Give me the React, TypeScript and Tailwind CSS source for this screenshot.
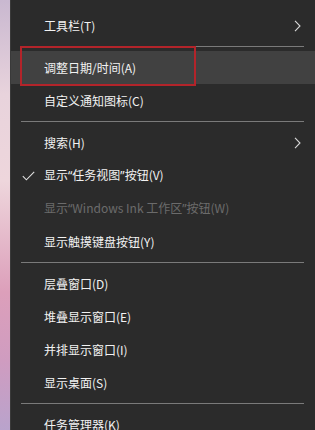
import React from 'react';

type Item =
  | { kind: 'sep' }
  | { kind: 'item'; label: React.ReactNode; sub?: boolean; checked?: boolean; disabled?: boolean; hover?: boolean };

// Latin font for the curly quotes so they render half-width, as in the Windows menu
const Q = ({ c }: { c: string }) => (
  <span style={{ fontFamily: '"Noto Sans", sans-serif' }}>{c}</span>
);

const items: Item[] = [
  { kind: 'item', label: '工具栏(T)', sub: true },
  { kind: 'sep' },
  { kind: 'item', label: '调整日期/时间(A)', hover: true },
  { kind: 'item', label: '自定义通知图标(C)' },
  { kind: 'sep' },
  { kind: 'item', label: '搜索(H)', sub: true },
  {
    kind: 'item',
    label: (
      <>
        显示<Q c="“" />任务视图<Q c="”" />按钮(V)
      </>
    ),
    checked: true,
  },
  {
    kind: 'item',
    label: (
      <>
        显示<Q c="“" />Windows Ink 工作区<Q c="”" />按钮(W)
      </>
    ),
    disabled: true,
  },
  { kind: 'item', label: '显示触摸键盘按钮(Y)' },
  { kind: 'sep' },
  { kind: 'item', label: '层叠窗口(D)' },
  { kind: 'item', label: '堆叠显示窗口(E)' },
  { kind: 'item', label: '并排显示窗口(I)' },
  { kind: 'item', label: '显示桌面(S)' },
  { kind: 'sep' },
  { kind: 'item', label: '任务管理器(K)' },
];

function Chevron() {
  return (
    <svg width="7" height="12" viewBox="0 0 7 12" fill="none">
      <path d="M1 0.8 L6 6 L1 11.2" stroke="#d8d8d8" strokeWidth="1.1" />
    </svg>
  );
}

function Check() {
  return (
    <svg width="13" height="10" viewBox="0 0 13 10" fill="none">
      <path d="M0.8 5.2 L4.4 8.8 L12.2 0.8" stroke="#e0e0e0" strokeWidth="1.1" />
    </svg>
  );
}

export default function App() {
  return (
    <div
      className="flex w-[315px] h-[430px] overflow-hidden"
      style={{ fontFamily: '"Noto Sans CJK SC", "Noto Sans", sans-serif' }}
    >
      {/* desktop wallpaper strip */}
      <div className="w-[10px] shrink-0 bg-[linear-gradient(to_bottom,#c9b8d0_0%,#e8d3dc_22%,#eed6dc_42%,#dc9fba_68%,#cf9cc0_84%,#b9a3cc_100%)]" />

      {/* context menu */}
      <div className="relative flex-1 bg-[#2b2b2b] border-l border-[#3a3a3a] pt-[9px]">
        {items.map((it, i) =>
          it.kind === 'sep' ? (
            <div key={i} className="py-[4px] pl-[10px] pr-[11px]">
              <div className="h-px bg-[#7a7a7a]" />
            </div>
          ) : (
            <div
              key={i}
              className={`flex items-center h-[33px] pl-[33px] pr-[14px] text-[12px] ${
                it.hover ? 'bg-[#414141]' : ''
              } ${it.disabled ? 'text-[#6b6b6b]' : 'text-[#f2f2f2]'}`}
            >
              <div className="w-0 relative">
                {it.checked && (
                  <span className="absolute -left-[22px] -top-[5px]">
                    <Check />
                  </span>
                )}
              </div>
              <span className="flex-1 whitespace-nowrap">{it.label}</span>
              {it.sub && <Chevron />}
            </div>
          )
        )}

        {/* red annotation box */}
        <div className="absolute left-[9px] top-[46px] w-[176px] h-[40px] border-2 border-[#b3242a] pointer-events-none" />
      </div>
    </div>
  );
}
